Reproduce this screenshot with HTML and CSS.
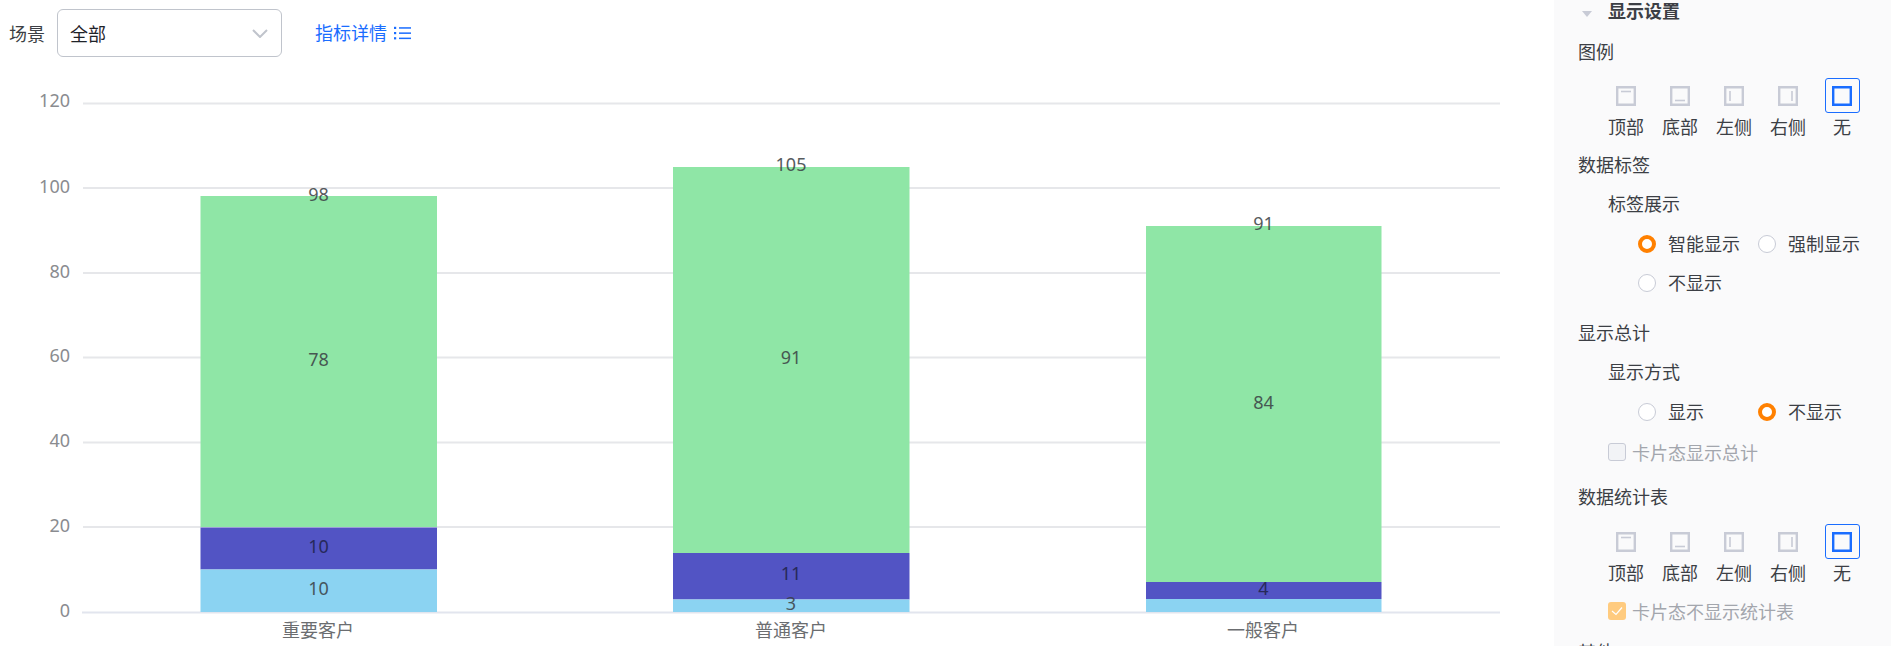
FILE: index.html
```html
<!DOCTYPE html>
<html lang="zh-CN">
<head>
<meta charset="utf-8">
<title>显示设置</title>
<link rel="stylesheet" href="styles.css">
</head>
<body>
<main class="main">
  <div class="toolbar">
    <span class="scene-label">场景</span>
    <div class="select">
      <span>全部</span>
      <svg class="chevron" width="16" height="9" viewBox="0 0 16 9"><path d="M1 1l7 7 7-7" fill="none" stroke="#c0c4cc" stroke-width="2"/></svg>
    </div>
    <a class="detail-link">指标详情
      <svg class="detail-icon" width="17" height="14" viewBox="0 0 17 14"><g fill="#1a6dff"><rect x="0" y="0.8" width="2.2" height="2.2"/><rect x="0" y="6" width="2.2" height="2.2"/><rect x="0" y="11.2" width="2.2" height="2.2"/><rect x="5" y="1.2" width="12" height="1.5"/><rect x="5" y="6.4" width="12" height="1.5"/><rect x="5" y="11.6" width="12" height="1.5"/></g></svg>
    </a>
  </div>
  <svg class="chart" width="1554" height="580" viewBox="0 66 1554 580">
    <g class="grid">
      <line x1="83" x2="1500" y1="103.5" y2="103.5"/>
      <line x1="83" x2="1500" y1="188" y2="188"/>
      <line x1="83" x2="1500" y1="273" y2="273"/>
      <line x1="83" x2="1500" y1="357.5" y2="357.5"/>
      <line x1="83" x2="1500" y1="442.5" y2="442.5"/>
      <line x1="83" x2="1500" y1="527" y2="527"/>
      <line class="axis" x1="82" x2="1500" y1="612.5" y2="612.5"/>
    </g>
    <g class="y-labels">
      <text x="70" y="107">120</text>
      <text x="70" y="193">100</text>
      <text x="70" y="278">80</text>
      <text x="70" y="362">60</text>
      <text x="70" y="447">40</text>
      <text x="70" y="532">20</text>
      <text x="70" y="617">0</text>
    </g>
    <g class="bars">
      <rect class="c-green" x="200.5" y="196" width="236.5" height="331"/>
      <rect class="c-indigo" x="200.5" y="527.5" width="236.5" height="42"/>
      <rect class="c-blue" x="200.5" y="569.5" width="236.5" height="42.5"/>
      <rect class="c-green" x="673" y="167" width="236.5" height="386"/>
      <rect class="c-indigo" x="673" y="553" width="236.5" height="46.5"/>
      <rect class="c-blue" x="673" y="599.5" width="236.5" height="12.5"/>
      <rect class="c-green" x="1146" y="226" width="235.5" height="356"/>
      <rect class="c-indigo" x="1146" y="582" width="235.5" height="17"/>
      <rect class="c-blue" x="1146" y="599" width="235.5" height="13"/>
    </g>
    <g class="values">
      <text x="318.5" y="201">98</text>
      <text x="318.5" y="366">78</text>
      <text class="on-indigo" x="318.5" y="553">10</text>
      <text x="318.5" y="595">10</text>
      <text x="791" y="171">105</text>
      <text x="791" y="364">91</text>
      <text class="on-indigo" x="791" y="580">11</text>
      <text x="791" y="610">3</text>
      <text x="1263.5" y="230">91</text>
      <text x="1263.5" y="409">84</text>
      <text class="on-indigo" x="1263.5" y="595">4</text>
    </g>
    <g class="x-labels">
      <text x="318" y="637">重要客户</text>
      <text x="791" y="637">普通客户</text>
      <text x="1263" y="637">一般客户</text>
    </g>
  </svg>
</main>
<aside class="panel">
  <div class="panel-title"><span class="caret"></span>显示设置</div>
  <div class="row row-legend">图例</div>
  <div class="positions">
    <div class="pos"><span class="pos-box"><svg width="20" height="20" viewBox="0 0 20 20"><path class="pos-frame" d="M1.2 1.2h17.6v17.6H1.2z"/><path class="pos-mark" d="M5 5.5h10"/></svg></span><span>顶部</span></div>
    <div class="pos"><span class="pos-box"><svg width="20" height="20" viewBox="0 0 20 20"><path class="pos-frame" d="M1.2 1.2h17.6v17.6H1.2z"/><path class="pos-mark" d="M5 14.5h10"/></svg></span><span>底部</span></div>
    <div class="pos"><span class="pos-box"><svg width="20" height="20" viewBox="0 0 20 20"><path class="pos-frame" d="M1.2 1.2h17.6v17.6H1.2z"/><path class="pos-mark" d="M6 5v10"/></svg></span><span>左侧</span></div>
    <div class="pos"><span class="pos-box"><svg width="20" height="20" viewBox="0 0 20 20"><path class="pos-frame" d="M1.2 1.2h17.6v17.6H1.2z"/><path class="pos-mark" d="M14 5v10"/></svg></span><span>右侧</span></div>
    <div class="pos"><span class="pos-box is-active"><svg width="20" height="20" viewBox="0 0 20 20"><path class="pos-frame-on" d="M1.2 1.2h17.6v17.6H1.2z"/></svg></span><span>无</span></div>
  </div>
  <div class="row row-labels">数据标签</div>
  <div class="row sub">标签展示</div>
  <div class="radios">
    <label class="radio"><span class="dot is-on"></span><span class="radio-text">智能显示</span></label>
    <label class="radio"><span class="dot"></span><span class="radio-text">强制显示</span></label>
    <label class="radio"><span class="dot"></span><span class="radio-text">不显示</span></label>
  </div>
  <div class="row row-total">显示总计</div>
  <div class="row sub">显示方式</div>
  <div class="radios">
    <label class="radio"><span class="dot"></span><span class="radio-text">显示</span></label>
    <label class="radio"><span class="dot is-on"></span><span class="radio-text">不显示</span></label>
  </div>
  <div class="check"><span class="box"></span>卡片态显示总计</div>
  <div class="row row-table">数据统计表</div>
  <div class="positions positions-table">
    <div class="pos"><span class="pos-box"><svg width="20" height="20" viewBox="0 0 20 20"><path class="pos-frame" d="M1.2 1.2h17.6v17.6H1.2z"/><path class="pos-mark" d="M5 5.5h10"/></svg></span><span>顶部</span></div>
    <div class="pos"><span class="pos-box"><svg width="20" height="20" viewBox="0 0 20 20"><path class="pos-frame" d="M1.2 1.2h17.6v17.6H1.2z"/><path class="pos-mark" d="M5 14.5h10"/></svg></span><span>底部</span></div>
    <div class="pos"><span class="pos-box"><svg width="20" height="20" viewBox="0 0 20 20"><path class="pos-frame" d="M1.2 1.2h17.6v17.6H1.2z"/><path class="pos-mark" d="M6 5v10"/></svg></span><span>左侧</span></div>
    <div class="pos"><span class="pos-box"><svg width="20" height="20" viewBox="0 0 20 20"><path class="pos-frame" d="M1.2 1.2h17.6v17.6H1.2z"/><path class="pos-mark" d="M14 5v10"/></svg></span><span>右侧</span></div>
    <div class="pos"><span class="pos-box is-active"><svg width="20" height="20" viewBox="0 0 20 20"><path class="pos-frame-on" d="M1.2 1.2h17.6v17.6H1.2z"/></svg></span><span>无</span></div>
  </div>
  <div class="check check-on"><span class="box box-on"><svg width="18" height="18" viewBox="0 0 18 18"><path d="M4 9l4 3.5L14 5.5" fill="none" stroke="#fff" stroke-width="1.2"/></svg></span>卡片态不显示统计表</div>
  <div class="row row-next">其他</div>
</aside>
</body>
</html>
```
FILE: styles.css
```css
html, body {
  margin: 0;
  padding: 0;
  height: 646px;
  overflow: hidden;
  background: #fff;
}
body {
  display: flex;
  font-family: "Noto Sans CJK SC", "Noto Sans", sans-serif;
  font-size: 18px;
  line-height: 22px;
  color: #3c3f45;
}
.main {
  width: 1554px;
  flex: none;
}
.toolbar {
  height: 66px;
  display: flex;
  align-items: flex-start;
  box-sizing: border-box;
  padding: 9px 0 0 9px;
}
.scene-label {
  width: 48px;
  height: 48px;
  line-height: 48px;
}
.select {
  width: 225px;
  height: 48px;
  box-sizing: border-box;
  border: 1px solid #c0c4cc;
  border-radius: 6px;
  display: flex;
  align-items: center;
  justify-content: space-between;
  padding: 0 13px 0 12px;
  color: #1f2329;
}
.chevron {
  display: block;
}
.detail-link {
  margin-left: 33px;
  height: 46px;
  display: flex;
  align-items: center;
  gap: 7px;
  color: #1a6dff;
}
.detail-icon {
  margin-top: 2px;
}
.chart {
  display: block;
}
.chart text {
  font-family: "Noto Sans", "Noto Sans CJK SC", sans-serif;
  font-size: 18px;
}
.grid line {
  stroke: #e6e7ea;
  stroke-width: 2;
}
.grid .axis {
  stroke: #e2e5ee;
}
.y-labels text {
  text-anchor: end;
  fill: #8a8c90;
}
.c-green { fill: #8fe6a6; }
.c-indigo { fill: #5254c4; }
.c-blue { fill: #8bd3f2; }
.values text {
  text-anchor: middle;
  fill: #3a3f44;
  opacity: 0.85;
}
.values .on-indigo {
  fill: #23254f;
  opacity: 0.9;
}
.x-labels text {
  text-anchor: middle;
  fill: #6b6d70;
}
.panel {
  flex: 1;
  height: 646px;
  background: #fafafb;
  box-sizing: border-box;
  padding-left: 24px;
  overflow: hidden;
}
.panel-title {
  height: 21px;
  line-height: 21px;
  font-weight: 700;
  display: flex;
  align-items: center;
  gap: 16px;
  padding-left: 4px;
}
.caret {
  width: 0;
  height: 0;
  margin-top: 7px;
  border-left: 5px solid transparent;
  border-right: 5px solid transparent;
  border-top: 6px solid #c8cbd6;
}
.row {
  height: 24px;
}
.row-legend { margin-top: 19px; }
.row-labels { margin-top: 16px; }
.row-total { margin-top: 26px; }
.row-table { margin-top: 21px; }
.row-next { margin-top: 17px; }
.sub {
  margin-top: 15px;
  margin-left: 30px;
}
.positions {
  display: flex;
  margin: 14px 0 0 21px;
}
.positions-table {
  margin-top: 15px;
}
.pos {
  width: 54px;
  display: flex;
  flex-direction: column;
  align-items: center;
  gap: 2px;
}
.pos-box {
  width: 35px;
  height: 35px;
  box-sizing: border-box;
  border: 1px solid transparent;
  border-radius: 3px;
  display: flex;
  align-items: center;
  justify-content: center;
}
.pos-box.is-active {
  border-color: #1a6dff;
}
.pos-frame {
  fill: none;
  stroke: #c8cbd6;
  stroke-width: 2.4;
}
.pos-mark {
  fill: none;
  stroke: #c8cbd6;
  stroke-width: 1.6;
}
.pos-frame-on {
  fill: none;
  stroke: #1a6dff;
  stroke-width: 2.4;
}
.radios {
  display: flex;
  flex-wrap: wrap;
  row-gap: 15px;
  margin: 16px 0 0 60px;
}
.radio {
  width: 120px;
  height: 24px;
  display: flex;
  align-items: center;
  gap: 12px;
}
.radio-text {
  height: 24px;
}
.dot {
  width: 18px;
  height: 18px;
  box-sizing: border-box;
  border: 1.4px solid #c8cbd6;
  border-radius: 50%;
  background: #fff;
  flex: none;
}
.dot.is-on {
  border: 4.5px solid #ff8000;
}
.check {
  display: flex;
  align-items: center;
  gap: 6px;
  height: 24px;
  margin: 16px 0 0 30px;
  color: #a3a6ad;
}
.check-on {
  margin-top: 16px;
}
.box {
  width: 18px;
  height: 18px;
  box-sizing: border-box;
  border: 1.4px solid #c8cbd6;
  border-radius: 3px;
  background: #f2f3f6;
  flex: none;
}
.box-on {
  border: 0;
  background: #ffcb7f;
}
.box-on svg {
  display: block;
}
```
